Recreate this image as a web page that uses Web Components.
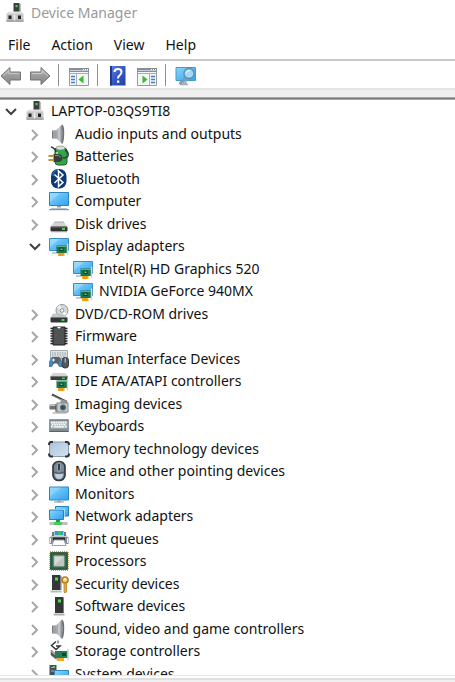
<!DOCTYPE html>
<html lang="en">
<head>
<meta charset="utf-8">
<title>Device Manager</title>
<style>
  body { margin: 0; background: #fff; }
</style>
</head>
<body>
<device-manager>
  <title-bar slot="title">Device Manager</title-bar>
  <menu-bar slot="menu">
    <menu-item>File</menu-item><menu-item>Action</menu-item><menu-item>View</menu-item><menu-item>Help</menu-item>
  </menu-bar>
  <tool-bar slot="tools">
    <tool-button icon="back" label="Back"></tool-button>
    <tool-button icon="forward" label="Forward"></tool-button>
    <tool-separator></tool-separator>
    <tool-button icon="consoleTree" label="Show or hide console tree"></tool-button>
    <tool-separator></tool-separator>
    <tool-button icon="help" label="Help"></tool-button>
    <tool-button icon="actionPane" label="Show or hide action pane"></tool-button>
    <tool-separator></tool-separator>
    <tool-button icon="scan" label="Scan for hardware changes"></tool-button>
  </tool-bar>
  <tree-view>
    <tree-row level="0" icon="computerRoot" open>LAPTOP-03QS9TI8</tree-row>
    <tree-row level="1" icon="speaker">Audio inputs and outputs</tree-row>
    <tree-row level="1" icon="battery">Batteries</tree-row>
    <tree-row level="1" icon="bluetooth">Bluetooth</tree-row>
    <tree-row level="1" icon="computer">Computer</tree-row>
    <tree-row level="1" icon="disk">Disk drives</tree-row>
    <tree-row level="1" icon="display" open>Display adapters</tree-row>
    <tree-row level="2" icon="display">Intel(R) HD Graphics 520</tree-row>
    <tree-row level="2" icon="display">NVIDIA GeForce 940MX</tree-row>
    <tree-row level="1" icon="dvd">DVD/CD-ROM drives</tree-row>
    <tree-row level="1" icon="firmware">Firmware</tree-row>
    <tree-row level="1" icon="hid">Human Interface Devices</tree-row>
    <tree-row level="1" icon="ide">IDE ATA/ATAPI controllers</tree-row>
    <tree-row level="1" icon="imaging">Imaging devices</tree-row>
    <tree-row level="1" icon="keyboard">Keyboards</tree-row>
    <tree-row level="1" icon="memory">Memory technology devices</tree-row>
    <tree-row level="1" icon="mouse">Mice and other pointing devices</tree-row>
    <tree-row level="1" icon="monitor">Monitors</tree-row>
    <tree-row level="1" icon="network">Network adapters</tree-row>
    <tree-row level="1" icon="printer">Print queues</tree-row>
    <tree-row level="1" icon="processor">Processors</tree-row>
    <tree-row level="1" icon="security">Security devices</tree-row>
    <tree-row level="1" icon="software">Software devices</tree-row>
    <tree-row level="1" icon="speaker">Sound, video and game controllers</tree-row>
    <tree-row level="1" icon="storage">Storage controllers</tree-row>
    <tree-row level="1" icon="system">System devices</tree-row>
  </tree-view>
</device-manager>

<script>
const DEFS = `<defs>
  <linearGradient id="scr" x1="0" y1="0" x2="1" y2="1"><stop offset="0" stop-color="#8fd6fb"/><stop offset=".5" stop-color="#5bbcf6"/><stop offset="1" stop-color="#35a0ee"/></linearGradient>
  <linearGradient id="spk" x1="0" y1="0" x2="1" y2="0"><stop offset="0" stop-color="#8d9196"/><stop offset=".45" stop-color="#d0d3d6"/><stop offset="1" stop-color="#85898e"/></linearGradient>
  <linearGradient id="arr" x1="0" y1="0" x2="0" y2="1"><stop offset="0" stop-color="#c2c2c2"/><stop offset=".5" stop-color="#9b9b9b"/><stop offset="1" stop-color="#858585"/></linearGradient>
  <linearGradient id="hlp" x1="0" y1="0" x2="1" y2="1"><stop offset="0" stop-color="#5f83e0"/><stop offset=".5" stop-color="#3558c6"/><stop offset="1" stop-color="#2340a4"/></linearGradient>
  <linearGradient id="mem" x1="0" y1="0" x2="1" y2="1"><stop offset="0" stop-color="#a9c3dc"/><stop offset="1" stop-color="#d5e3f0"/></linearGradient>
</defs>`;
const rack = `<path d="M9.500 1h6v10h-6z" fill="#3c3f3d"/><path d="M15.500 1.500l1 1v9h-1z" fill="#777"/><rect x="11.500" y="3" width="2.200" height="2.200" fill="#3fd04a"/><path d="M2.500 12l2-2.500h13l2 2.500z" fill="#e2e3e4"/><path d="M2.500 11.500h17v8.500h-17z" fill="#c6c8ca"/><path d="M2.500 17.500h17V20h-17z" fill="#a6a8aa"/><path d="M4.500 13.500h3v3.500h-3zM14 13.500h3v3.500h-3z" fill="#222"/><path d="M10.500 12.500v6" stroke="#eee" stroke-width="1.500"/>`;
const card = `<path d="M8.500 10.500h10.500v7.500h-10.500z" fill="#19774b"/><path d="M9 11h9.500v1H9z" fill="#5bb287"/><path d="M11.500 12.500h4v3.500h-4z" fill="#0a3f2a"/><path d="M12.500 13.500h2v1.500h-2z" fill="#76caa0"/><path d="M10 18h6.500v3H10z" fill="#f6a821"/><path d="M12 18v3M14.200 18v3" stroke="#d98408" stroke-width=".7"/><path d="M19.500 8.500v11.500" stroke="#cfd3d3" stroke-width="1.500"/>`;
const window_ = `<path d="M1.500 3.500h19v17h-19z" fill="#f5f6f7" stroke="#969ba1"/><path d="M1 3h20v4H1z" fill="#878e98"/><path d="M2 5.500h18" stroke="#c7ccd3"/><path d="M15 4.500h1M17 4.500h1M19 4.500h1" stroke="#fff"/><path d="M1.500 8.500h19" stroke="#a9aeb5"/>`;
const ICONS = {
  computerRoot: rack,
  speaker: `<path d="M4 7.500h4.500v8H4z" fill="#767b80"/><path d="M5 8h3v7H5z" fill="#9da2a7"/><path d="M8.500 7L14 1.500v19.500L8.500 15.500z" fill="url(#spk)"/><path d="M14 1.500q2.500 1 2.200 9.700T14 21z" fill="#6a7076"/><path d="M14.200 4q1 7 0 14z" fill="#b8bcc0"/>`,
  battery: `<path d="M8 3h8q3 0 3 3v11q0 3-3 3h-6q-3 0-3-3V4z" fill="#2da74a" stroke="#285b33"/><ellipse cx="12.500" cy="3" rx="4.500" ry="2" fill="#d7dedb" stroke="#7c8580" stroke-width=".7"/><path d="M9 7v10" stroke="#8be28f" stroke-width="2"/><path d="M3 2q4 1 5 5M17 5q4 2 3 6-1 2-5 2" fill="none" stroke="#353535" stroke-width="1.500"/><path d="M5.500 9h4q5 0 5 4t-5 4h-4z" fill="#3b3b3b"/><path d="M7 10.500h3q2 .5 2.500 2" fill="none" stroke="#8b8b8b"/><path d="M.5 11h5M.5 15h5" stroke="#c4922a" stroke-width="1.800"/>`,
  bluetooth: `<rect x="3" y="1" width="15.500" height="19.500" rx="7" fill="#0a3b78"/><path d="M5 8q0-6 6-6" stroke="#4d7db1" fill="none"/><path d="M6.500 6.500l8.500 8-4.500 4V3l4.500 4-8.500 8" fill="none" stroke="#fff" stroke-width="1.500"/>`,
  computer: `<path d="M1.500 2.500h19v13h-19z" fill="url(#scr)" stroke="#2c83bd"/><path d="M2 12L12 3h-10z" fill="#b5e5fd" opacity=".45"/><path d="M9 16h4v1.500H9z" fill="#8da2af"/><path d="M3.500 18h15l2.500 2H1z" fill="#b5c2cc"/><path d="M1 19.700h20" stroke="#677d8c" stroke-width=".8"/>`,
  disk: `<path d="M6 9h10l3.500 5h-17z" fill="#d2d3d4"/><path d="M6.500 9h9.500" stroke="#aaa"/><rect x="2.500" y="13.500" width="17" height="5" rx="1" fill="#333"/><path d="M3 14h16" stroke="#777"/><rect x="14" y="15" width="3" height="2" fill="#46d84d"/><path d="M3 19h16" stroke="#bbb" stroke-width=".7"/>`,
  display: `<path d="M1.500 3.500h19v12h-19z" fill="url(#scr)" stroke="#378fc8"/><path d="M2 12L12 4H2z" fill="#b8e6fd" opacity=".45"/><path d="M4 18h6" stroke="#b2bdc5" stroke-width="1.500"/>` + card,
  dvd: `<circle cx="14" cy="7.500" r="6" fill="#d5d7d9" stroke="#929699"/><path d="M14 7.500L9 4.500l3-2.500zM14 7.500l5 3-3 2.500z" fill="#f4f5f5"/><circle cx="14" cy="7.500" r="1.800" fill="#fff" stroke="#8e9194"/><path d="M5 10.500h7l5 2 2.500 2h-17z" fill="#bfc2c4" opacity=".9"/><rect x="2.500" y="14" width="17" height="5.500" rx="1" fill="#343636"/><path d="M3 14.500h16" stroke="#7b7e7f"/><rect x="13.500" y="16" width="3" height="2" fill="#42d84b"/>`,
  firmware: `<path d="M5 2h12v18H5z" fill="#4f5353" stroke="#222"/><path d="M2.500 3.500H5M2.500 6H5M2.500 8.500H5M2.500 11H5M2.500 13.500H5M2.500 16H5M2.500 18.500H5M17 3.500h2.500M17 6h2.500M17 8.500h2.500M17 11h2.500M17 13.500h2.500M17 16h2.500M17 18.500h2.500" stroke="#222" stroke-width="1.300"/><path d="M9 2h4q-2 3-4 0" fill="#fff"/>`,
  hid: `<path d="M2.500 2.500h17v8h-17z" fill="#e2e6e9" stroke="#a3abb0"/><path d="M4 5h14M4 7h14M5 9h12" stroke="#8e989e" stroke-dasharray="1.500 1"/><path d="M4 9h7l2 2 1 8h-2.500L9 15.500H6L3.500 19H1q0-8 3-10z" fill="#59636e"/><path d="M1 18q.5-5 2-8l2 1-1 8zM12 11l1.500 7-2 1-1-4z" fill="#3a8bd3"/><path d="M4 12h3M5.500 10.500v3" stroke="#e4edf4"/><rect x="14" y="9.500" width="6.500" height="10.500" rx="3" fill="#525961" stroke="#33383d"/><path d="M17.200 10v4.500" stroke="#c7cdd2"/>`,
  ide: `<path d="M5 3h12l3 3H2.500z" fill="#d2d4d5"/><path d="M2.500 6h17v4h-17z" fill="#3b3d3e"/><path d="M3 6.500h16" stroke="#777"/><path d="M14 7.500h3v1.500h-3z" fill="#44d14c"/>` + card,
  imaging: `<path d="M4 1.500L19 9" stroke="#454747" stroke-width="2"/><path d="M5 3l12 6" stroke="#bcbdbd" stroke-width=".7"/><path d="M13 6l6 2-2 3h-5z" fill="#969a9b"/><rect x="9" y="10" width="11" height="9" fill="#c7cacb" stroke="#85898b"/><path d="M1.500 11.500H8v5H1.500z" fill="#6e7273"/><path d="M1.500 12.500H8" stroke="#c3c5c5"/><path d="M8 11v8" stroke="#454747"/><circle cx="15" cy="14.500" r="3" fill="#54686b"/><circle cx="15" cy="14.500" r="1.700" fill="#1d585d"/><path d="M4.500 20h14" stroke="#999"/>`,
  keyboard: `<path d="M1.500 4.500h19v12h-19z" fill="#7f8a91" stroke="#8b969e"/><path d="M2.500 6h17v7.500h-17z" fill="#b5bdc3"/><path d="M3 7.500h16M4 9.500h14M3 11.500h2M17 11.500h2" stroke="#fff" stroke-width="1.300" stroke-dasharray="1.500 .8"/><path d="M6 11.800h10" stroke="#fff" stroke-width="1.200"/><path d="M1.500 16.500h19" stroke="#59636a"/>`,
  memory: `<rect x="1.500" y="4" width="19" height="14.500" rx="2" fill="url(#mem)" stroke="#839bb0"/><path d="M5 4H3q-2 0-2 3M17 4h2q2 0 2 3M1 15.500q0 3 2 3h2M21 15.500q0 3-2 3h-2" fill="none" stroke="#333" stroke-width="2"/>`,
  mouse: `<rect x="5" y="1.500" width="12" height="19" rx="5.500" fill="#798896" stroke="#34383c" stroke-width="1.700"/><path d="M7 14h8q0 5-4 5t-4-5z" fill="#bdd0df"/><path d="M6 12q5 3 10 0" fill="none" stroke="#4c5760"/><rect x="9.500" y="3" width="3" height="8" rx="1.500" fill="#343c43" stroke="#bcc7d0" stroke-width=".7"/>`,
  monitor: `<path d="M1.500 4h19v13h-19z" fill="url(#scr)" stroke="#2f85bf"/><path d="M2 14L13 4.500H2z" fill="#b8e6fd" opacity=".35"/><path d="M9 17.500h4V19H9z" fill="#9aabb5"/><path d="M6 19h10" stroke="#8395a1"/>`,
  network: `<path d="M7.500 1.500h13V11h-13z" fill="url(#scr)" stroke="#267fb7"/><path d="M1.500 5h14v9.500h-14z" fill="url(#scr)" stroke="#fff" stroke-width="2"/><path d="M1.500 5h14v9.500h-14z" fill="url(#scr)" stroke="#267fb7"/><path d="M8 15h4v2H8z" fill="#309841"/><path d="M1.500 18.500h18" stroke="#b7c4bc" stroke-width="3"/><path d="M6 18.500h8" stroke="#48cb57" stroke-width="3"/>`,
  printer: `<path d="M6.500 3h9v4h-9z" fill="#2b9be4"/><path d="M10 3h3v4h-3z" fill="#3cc35e"/><path d="M3.500 7h15l2 3H1.500z" fill="#c6cacd"/><path d="M1.500 9h19v7h-19z" fill="#858b91"/><path d="M5 4v4M17 4v4" stroke="#777" stroke-width="2"/><path d="M5 9.500h12v3.500H5z" fill="#282a2c"/><path d="M6 12h10l2 5.500H4z" fill="#fff" stroke="#9ca2a7"/><path d="M2.500 10v5M19.500 10v5" stroke="#eee"/>`,
  processor: `<rect x="2" y="2" width="18" height="18" fill="#35724f" stroke="#9e843d" stroke-width="1.400" stroke-dasharray="1 1"/><path d="M3 3h16v16H3z" fill="#356a4f" stroke="#244f3b"/><path d="M6 6h10v10H6z" fill="#d7dbd9" stroke="#a5b3ab"/><path d="M7 15l8-8v8z" fill="#bfc5c1"/>`,
  security: `<path d="M4 2h8v15H4z" fill="#353837"/><path d="M12 2l1.500 1v14H12z" fill="#7b7f7d"/><path d="M7 4.500h3v3H7z" fill="#43e34a"/><path d="M2.500 18.500h11" stroke="#b7b9b8" stroke-width="2"/><circle cx="17" cy="7" r="3" fill="#f5d17b" stroke="#bd8120" stroke-width="1.700"/><path d="M16 10h2.500v9l-1.500 1-1-1z" fill="#e6ad44" stroke="#b77b1d" stroke-width=".8"/><circle cx="17" cy="6" r="1" fill="#fff"/>`,
  software: `<path d="M7 2h8v16H7z" fill="#343736"/><path d="M15 2l1 1v15h-1z" fill="#7b7f7d"/><path d="M10 4.500h3v3h-3z" fill="#43e34a"/><path d="M5.500 19.500h11" stroke="#adafae" stroke-width="2"/>`,
  storage: `<path d="M8 1.500L3.500 5.500 8 9.500l4-3.500H8" fill="none" stroke="#343434" stroke-width="1.500"/><path d="M10 .5v3" stroke="#343434"/><path d="M3 10l5 4h6v5H8l-5-4z" fill="#aeb3b1" stroke="#777" stroke-width=".7"/><path d="M3 12l5 4v3l-5-4z" fill="#515554"/><path d="M7 11h12.500v7H7z" fill="#247d56"/><path d="M14 13h4v3h-4z" fill="#0c4930"/><path d="M9 18h7v3H9z" fill="#f4a927"/><path d="M20 9v11" stroke="#c3c9c6" stroke-width="1.200"/>`,
  system: `<path d="M1.500 2h7v15h-7z" fill="#475158"/><path d="M3 4.500h4M3 8h4" stroke="#aab5bd"/><path d="M5 3h2v2H5z" fill="#43d64b"/><path d="M6.500 7.500h14v10h-14z" fill="url(#scr)" stroke="#3585b7"/>`,
  back: `<path d="M1 11L10 2.500v4.500h10.500v8H10v4.500z" fill="url(#arr)" stroke="#747474" stroke-linejoin="round"/><path d="M3 11l6-5.500V8.500h10" fill="none" stroke="#d0d0d0" stroke-width=".8"/>`,
  forward: `<path d="M21 11L12 2.500v4.500H1.500v8H12v4.500z" fill="url(#arr)" stroke="#747474" stroke-linejoin="round"/><path d="M3 8.500h10v-3l6 5.500" fill="none" stroke="#d0d0d0" stroke-width=".8"/>`,
  consoleTree: window_ + `<path d="M8.500 9v11" stroke="#a9aeb5"/><path d="M3 11.500h4M3 14.500h4M3 17.500h4" stroke="#3c80c4" stroke-width="1.300"/><path d="M15.500 10.500v8l-5-4z" fill="#3eb632"/>`,
  actionPane: window_ + `<path d="M13.500 9v11" stroke="#a9aeb5"/><path d="M15 11.500h4M15 14.500h4M15 17.500h4" stroke="#3c80c4" stroke-width="1.300"/><path d="M6.500 10.500v8l5-4z" fill="#3eb632"/>`,
  help: `<path d="M3 1h15.500v19.500H3z" fill="url(#hlp)"/><path d="M3 1h2v19.500H3z" fill="#1f3793"/><path d="M7.500 7q0-3 3.500-3t3.500 3q0 2-2 3.500-1.500 1-1.500 3" fill="none" stroke="#fff" stroke-width="2"/><path d="M10 15.500h2.300v2.300H10z" fill="#fff"/>`,
  scan: `<path d="M1 2.500h19.500v13H1z" fill="url(#scr)" stroke="#459ac8"/><path d="M5 19.500h8M8 16h3v3H8z" stroke="#9aacb7" fill="#b1c0ca" stroke-width="1.300"/><path d="M10.500 13l-6 6" stroke="#7c9bb0" stroke-width="2.500"/><circle cx="14" cy="8.500" r="5" fill="#a1daf7" stroke="#5d8fad" stroke-width="1.300"/><path d="M11 8q1-3 4-2.500" fill="none" stroke="#effaff"/>`
};

const define = (name, markup, setup) => {
  const template = document.createElement('template');
  template.innerHTML = markup;
  customElements.define(name, class extends HTMLElement {
    constructor() {
      super();
      this.attachShadow({ mode: 'open' }).append(template.content.cloneNode(true));
    }
    connectedCallback() { if (setup) setup(this, this.shadowRoot); }
  });
};

customElements.define('device-icon', class extends HTMLElement {
  static observedAttributes = ['name'];
  constructor() {
    super();
    this.attachShadow({ mode: 'open' });
  }
  attributeChangedCallback() {
    this.shadowRoot.innerHTML = `<style>
      :host { display: block; flex: none; width: 22px; height: 22px; }
      svg { display: block; width: 100%; height: 100%; }
    </style><svg viewBox="0 0 22 22" aria-hidden="true">${DEFS}${ICONS[this.getAttribute('name')] || ''}</svg>`;
  }
});

define('device-manager', `<style>
  :host { display: flex; flex-direction: column; height: 100vh; overflow: hidden; background: #fff;
    color: #111; font: 14px/22px "Noto Sans", "Open Sans", sans-serif; }
  .gap { flex: none; height: 7px; background: #efefef; border-top: 2px solid #e4e4e4; }
  .edge { flex: none; height: 1px; background: #777; border: solid #aaa; border-width: 1px 0; }
  main { flex: 1; min-height: 0; overflow: hidden; }
  footer { flex: none; height: 2px; background: #f0f0f0; border-top: 2px solid #e0e0e0; margin-top: 2px; }
  .line { flex: none; height: 1px; background: #e6e6e6; }
</style>
<slot name="title"></slot><slot name="menu"></slot><slot name="tools"></slot>
<div class="gap"></div><div class="edge"></div>
<main><slot></slot></main>
<div class="line"></div><footer></footer>`);

define('title-bar', `<style>
  :host { display: flex; flex: none; align-items: center; gap: 5px; height: 26px; padding-left: 4px; }
  h1 { margin: 0; font: inherit; color: #999; }
</style>
<device-icon name="computerRoot"></device-icon><h1><slot></slot></h1>`);

define('menu-bar', `<style>
  :host { display: flex; flex: none; align-items: center; gap: 21px; height: 33px; padding: 0 8px; border-bottom: 2px solid #c9c9cb; }
</style><slot></slot>`, host => host.setAttribute('role', 'menubar'));

define('menu-item', `<style>
  :host { display: block; }
  button { display: block; padding: 5px 0 0; border: 0; background: none; font: inherit; color: inherit; }
</style><button type="button" role="menuitem"><slot></slot></button>`);

define('tool-bar', `<style>
  :host { display: flex; flex: none; align-items: center; gap: 7px; height: 27px; }
</style><slot></slot>`, host => host.setAttribute('role', 'toolbar'));

define('tool-button', `<style>
  :host { display: block; padding-top: 2px; }
  button { display: block; padding: 0; border: 0; background: none; }
</style><button type="button"><device-icon></device-icon></button>`, (host, root) => {
  root.querySelector('button').setAttribute('aria-label', host.getAttribute('label'));
  root.querySelector('device-icon').setAttribute('name', host.getAttribute('icon'));
});

define('tool-separator', `<style>
  :host { display: block; width: 2px; height: 22px; border-left: 1px solid #8f8f8f; }
</style>`);

define('tree-view', `<style>
  :host { display: block; }
  ::slotted(tree-row) { height: 22px; }
  ::slotted(tree-row:nth-child(even)) { height: 23px; }
</style><slot></slot>`, host => {
  host.setAttribute('role', 'tree');
  host.addEventListener('row-toggle', event => {
    const row = event.target;
    const level = Number(row.getAttribute('level'));
    for (let next = row.nextElementSibling; next && Number(next.getAttribute('level')) > level; next = next.nextElementSibling)
      next.hidden = !row.hasAttribute('open');
  });
});

define('tree-row', `<style>
  :host { display: flex; align-items: center; padding-left: 2px; white-space: nowrap; }
  :host([level="1"]) { padding-left: 26px; }
  :host([level="2"]) { padding-left: 50px; }
  :host([hidden]) { display: none; }
  button { flex: none; width: 18px; height: 22px; padding: 0; border: 0; background: none; }
  :host([level="2"]) button { visibility: hidden; }
  svg { display: block; width: 18px; height: 22px; fill: none; stroke-width: 2; }
  .down { display: none; stroke: #404040; }
  .right { stroke: #a6a6a6; }
  :host([open]) .down { display: block; }
  :host([open]) .right { display: none; }
  device-icon { margin: 0 5px 0 4px; }
</style>
<button type="button"><svg viewBox="0 0 18 22" aria-hidden="true"><path class="right" d="M6 7l5 5-5 5"/><path class="down" d="M4 9l5 5 5-5"/></svg></button>
<device-icon></device-icon><span id="label"><slot></slot></span>`, (host, root) => {
  host.setAttribute('role', 'treeitem');
  root.querySelector('device-icon').setAttribute('name', host.getAttribute('icon'));
  const button = root.querySelector('button');
  button.setAttribute('aria-label', 'Expand or collapse ' + host.textContent);
  button.onclick = () => {
    host.toggleAttribute('open');
    host.dispatchEvent(new CustomEvent('row-toggle', { bubbles: true }));
  };
});
</script>
</body>
</html>
